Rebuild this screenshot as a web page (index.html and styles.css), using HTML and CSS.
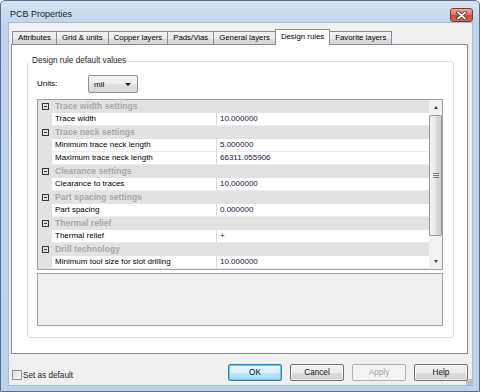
FILE: index.html
```html
<!DOCTYPE html>
<html lang="en">
<head>
    <meta charset="UTF-8">
    <title>PCB Properties</title>
    <link rel="stylesheet" href="styles.css">
</head>
<body>
    <div class="window">
        <div class="titlebar">
            <span class="title">PCB Properties</span>
            <a href="#" class="close" title="Close">
                <svg width="11" height="9" viewBox="0 0 11 9">
                    <path d="M2 1.5 L9 7.5 M9 1.5 L2 7.5" stroke="#5a1e14" stroke-width="3.2" stroke-linecap="square"/>
                    <path d="M2 1.5 L9 7.5 M9 1.5 L2 7.5" stroke="#fff" stroke-width="1.8" stroke-linecap="square"/>
                </svg>
            </a>
        </div>
        <div class="client">
            <div class="tabs">
                <a href="#" class="tab">Attributes</a>
                <a href="#" class="tab">Grid &amp; units</a>
                <a href="#" class="tab">Copper layers</a>
                <a href="#" class="tab">Pads/Vias</a>
                <a href="#" class="tab">General layers</a>
                <a href="#" class="tab active">Design rules</a>
                <a href="#" class="tab">Favorite layers</a>
            </div>
            <div class="panel">
                <fieldset class="group">
                    <legend>Design rule default values</legend>
                    <div class="group-body">
                        <div class="units-row">
                            <label class="units-label">Units:</label>
                            <div class="combo">
                                <span>mil</span>
                                <i class="combo-arrow"></i>
                            </div>
                        </div>
                        <div class="propgrid">
                            <div class="rows">
                                <div class="row cat"><span class="margin"><i class="toggle"></i></span><span class="cat-name">Trace width settings</span></div>
                                <div class="row item"><span class="margin"></span><span class="name">Trace width</span><span class="value">10.000000</span></div>
                                <div class="row cat"><span class="margin"><i class="toggle"></i></span><span class="cat-name">Trace neck settings</span></div>
                                <div class="row item"><span class="margin"></span><span class="name">Minimum trace neck length</span><span class="value">5.000000</span></div>
                                <div class="row item"><span class="margin"></span><span class="name">Maximum trace neck length</span><span class="value">66311.055906</span></div>
                                <div class="row cat"><span class="margin"><i class="toggle"></i></span><span class="cat-name">Clearance settings</span></div>
                                <div class="row item"><span class="margin"></span><span class="name">Clearance to traces</span><span class="value">10.000000</span></div>
                                <div class="row cat"><span class="margin"><i class="toggle"></i></span><span class="cat-name">Part spacing settings</span></div>
                                <div class="row item"><span class="margin"></span><span class="name">Part spacing</span><span class="value">0.000000</span></div>
                                <div class="row cat"><span class="margin"><i class="toggle"></i></span><span class="cat-name">Thermal relief</span></div>
                                <div class="row item"><span class="margin"></span><span class="name">Thermal relief</span><span class="value">+</span></div>
                                <div class="row cat"><span class="margin"><i class="toggle"></i></span><span class="cat-name">Drill technology</span></div>
                                <div class="row item"><span class="margin"></span><span class="name">Minimum tool size for slot drilling</span><span class="value">10.000000</span></div>
                            </div>
                            <div class="vscroll">
                                <span class="sb-btn"><i class="tri-up"></i></span>
                                <span class="thumb"><i class="grip"></i></span>
                                <span class="track"></span>
                                <span class="sb-btn"><i class="tri-down"></i></span>
                            </div>
                        </div>
                        <div class="desc"></div>
                    </div>
                </fieldset>
            </div>
            <div class="footer">
                <label class="check"><span class="box"></span>Set as default</label>
                <div class="buttons">
                    <button class="btn default">OK</button>
                    <button class="btn">Cancel</button>
                    <button class="btn" disabled>Apply</button>
                    <button class="btn">Help</button>
                </div>
            </div>
            <span class="grip-corner"></span>
        </div>
    </div>
</body>
</html>
```

FILE: styles.css
```css
* {
    box-sizing: border-box;
}

body {
    margin: 0;
    font-family: 'Liberation Sans', Arial, sans-serif;
    font-size: 8px;
    color: #000;
}

a {
    color: inherit;
    text-decoration: none;
}

.window {
    width: 480px;
    height: 392px;
    border: 1px solid #5a6e88;
    border-radius: 5px 5px 0 0;
    background: linear-gradient(#d6e4f4, #c0d5ed 22px, #bcd2eb);
    padding: 0 6px 5px 7px;
    display: flex;
    flex-direction: column;
}

.titlebar {
    height: 21px;
    display: flex;
    align-items: flex-start;
    flex: none;
}

.title {
    font-size: 9px;
    line-height: 11px;
    padding: 8px 0 0 2px;
    color: #1e1e1e;
}

.close {
    margin-left: auto;
    margin-top: 7px;
    width: 23px;
    height: 14px;
    border: 1px solid #7a3a30;
    border-radius: 3px;
    background: linear-gradient(#e9a99b, #d57a66 45%, #c44a32 55%, #d56a50);
    display: flex;
    align-items: center;
    justify-content: center;
}

.close svg {
    display: block;
}

.client {
    flex: 1;
    position: relative;
    background: #f0f0f0;
    border: 1px solid #a9bcd2;
    padding: 6px 4px 0 2px;
    display: flex;
    flex-direction: column;
}

/* tab strip */

.tabs {
    height: 16px;
    display: flex;
    align-items: flex-end;
    padding-left: 1px;
    margin-bottom: -1px;
    flex: none;
}

.tab {
    height: 14px;
    line-height: 12px;
    font-size: 7.8px;
    padding: 0 5px;
    border: 1px solid #898c95;
    border-bottom: none;
    background: linear-gradient(#f2f2f2, #ebebeb 50%, #dddddd 51%, #d4d4d4);
    margin-left: -1px;
    white-space: nowrap;
}

.tab:first-child {
    margin-left: 0;
}

.tab.active {
    height: 16px;
    line-height: 13px;
    background: #fff;
    z-index: 1;
}

.panel {
    height: 310px;
    flex: none;
    border: 1px solid #898c95;
    background: #fff;
    padding: 11px 13px 15px 15px;
    display: flex;
    flex-direction: column;
}

/* group box */

.group {
    margin: 0;
    padding: 0;
    flex: 1;
    border: 1px solid #d5dfe5;
    border-radius: 3px;
    min-width: 0;
}

.group legend {
    margin-left: 2px;
    padding: 0 2px;
    line-height: 10px;
    font-size: 8.2px;
    color: #1e1e1e;
}

.group-body {
    padding: 9px 10px 0 9px;
}

.units-row {
    height: 18px;
    display: flex;
    align-items: center;
}

.units-label {
    width: 51px;
    padding-bottom: 2px;
}

.combo {
    width: 50px;
    height: 18px;
    border: 1px solid #8e8f8f;
    border-radius: 2px;
    background: linear-gradient(#f4f4f4, #ececec 50%, #e0e0e0 51%, #dadada);
    display: flex;
    align-items: center;
    padding: 0 6px 0 5px;
}

.combo span {
    flex: 1;
}

.combo-arrow {
    width: 0;
    height: 0;
    border-left: 3px solid transparent;
    border-right: 3px solid transparent;
    border-top: 3px solid #111;
}

/* property grid */

.propgrid {
    margin-top: 6px;
    height: 171px;
    border: 1px solid #a0a0a0;
    display: flex;
}

.rows {
    flex: 1;
    display: flex;
    flex-direction: column;
}

.row {
    height: 13px;
    display: flex;
    line-height: 12px;
}

.row .margin {
    width: 14px;
    flex: none;
    background: #e2e2e2;
    display: flex;
    align-items: center;
    justify-content: center;
}

.row.cat {
    background: #e2e2e2;
}

.cat-name {
    padding-left: 3px;
    font-weight: bold;
    font-size: 8.6px;
    color: #a8a8a8;
}

.toggle {
    width: 7px;
    height: 7px;
    border: 1px solid #333;
    background: linear-gradient(transparent 2px, #333 2px, #333 3px, transparent 3px);
    background-size: 3px 5px;
    background-position: 1px 0;
    background-repeat: no-repeat;
}

.row.item .name {
    width: 165px;
    flex: none;
    padding-left: 3px;
    border-right: 1px solid #dadada;
    border-bottom: 1px solid #ececec;
    background: #fff;
}

.row.item .value {
    flex: 1;
    padding-left: 3px;
    border-bottom: 1px solid #ececec;
    background: #fff;
    color: #1a1438;
}

.vscroll {
    width: 13px;
    flex: none;
    background: #f2f2f2;
    display: flex;
    flex-direction: column;
}

.sb-btn {
    height: 15px;
    flex: none;
    display: flex;
    align-items: center;
    justify-content: center;
}

.tri-up,
.tri-down {
    width: 0;
    height: 0;
    border-left: 2.5px solid transparent;
    border-right: 2.5px solid transparent;
}

.tri-up {
    border-bottom: 3px solid #444;
}

.tri-down {
    border-top: 3px solid #444;
}

.thumb {
    height: 121px;
    flex: none;
    border: 1px solid #979797;
    border-radius: 2px;
    background: linear-gradient(90deg, #f3f3f3, #e8e8e8 50%, #d8d8d8 51%, #d0d0d0);
    display: flex;
    align-items: center;
    justify-content: center;
}

.grip {
    width: 6px;
    height: 5px;
    background: repeating-linear-gradient(#7a7a7a 0, #7a7a7a 1px, transparent 1px, transparent 2px);
}

.track {
    flex: 1;
}

.desc {
    margin-top: 3px;
    height: 53px;
    border: 1px solid #a0a0a0;
    background: #f0f0f0;
}

/* bottom bar */

.footer {
    margin-top: 9px;
    height: 18px;
    display: flex;
    align-items: center;
    flex: none;
}

.check {
    display: flex;
    align-items: center;
    margin: 6px 0 0 1px;
    gap: 1px;
    font-size: 8.2px;
    color: #1e1e1e;
}

.box {
    width: 10px;
    height: 10px;
    border: 1px solid #8e8f8f;
    background: linear-gradient(135deg, #dcdcdc, #fbfbfb);
}

.buttons {
    margin-left: auto;
    display: flex;
    gap: 8px;
}

.btn {
    width: 54px;
    height: 17px;
    padding: 0;
    font-family: inherit;
    font-size: 8.2px;
    color: #111;
    border: 1px solid #707070;
    border-radius: 2px;
    background: linear-gradient(#f2f2f2, #ebebeb 50%, #dddddd 51%, #cfcfcf);
    box-shadow: inset 0 0 0 1px rgba(255, 255, 255, 0.7);
}

.btn.default {
    border-color: #3c7fb1;
    box-shadow: inset 0 0 0 1px #62c6f0;
    background: linear-gradient(#eaf6fd, #d9f0fc 50%, #bee6fd 51%, #a7d9f5);
}

.btn[disabled] {
    border-color: #adb2b5;
    background: #f4f4f4;
    color: #a0a0a0;
    box-shadow: none;
}

.grip-corner {
    position: absolute;
    right: 0;
    bottom: 0;
    width: 6px;
    height: 6px;
    background: radial-gradient(circle, #9aa6b4 0.6px, transparent 0.9px);
    background-size: 2px 2px;
}
```
